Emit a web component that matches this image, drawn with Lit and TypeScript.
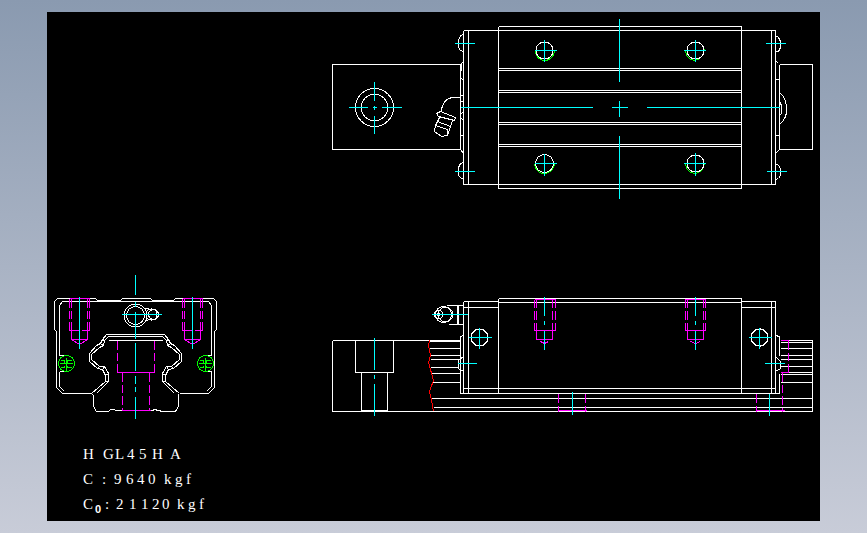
import {LitElement, html, svg, css} from 'lit';
import {customElement} from 'lit/decorators.js';

// every view is traced in its own zoomed (3x) coordinates, origin = page position of the crop
interface View {
    x: number;
    y: number;
    white?: string;
    cyan?: string;
    magenta?: string;
    dash?: string;
    green?: string;
    red?: string;
    circles?: [number, number, number, string][];
}

const circle = (cx: number, cy: number, r: number, cls = 'w') => [cx, cy, r, cls] as [number, number, number, string];

const mirrorX = (d: string, axis: number) =>
    d.replace(/([ML])(-?[\d.]+) (-?[\d.]+)/g, (_m, c, x, y) => `${c}${axis - Number(x)} ${y}`);

const snap = (origin: number, v: number) => Math.floor(origin + v / 3) + 0.5;

// traced coordinates to page pixels, on pixel centres so lines stay one pixel wide
const toPage = (d: string, v: View) =>
    d.replace(/(-?[\d.]+) (-?[\d.]+)/g, (_m, x, y) => `${snap(v.x, Number(x))} ${snap(v.y, Number(y))}`);

const dashed = (d: string, on = 26, off = 9) => {
    let out = '';
    for (const m of d.matchAll(/M(-?[\d.]+) (-?[\d.]+)L(-?[\d.]+) (-?[\d.]+)/g)) {
        const [x1, y1, x2, y2] = m.slice(1).map(Number);
        const len = Math.hypot(x2 - x1, y2 - y1);
        const ux = (x2 - x1) / len;
        const uy = (y2 - y1) / len;
        for (let t = 0; t < len; t += on + off) {
            const e = Math.min(t + on, len);
            out += `M${x1 + ux * t} ${y1 + uy * t}L${x1 + ux * e} ${y1 + uy * e} `;
        }
    }
    return out;
};

const frontBlock = `M165 100L52 100L43 110L43 193L50 198L50 368L68 385L155 385
    M58 272L58 120L68 110L180 108 M58 320L58 365L72 378 M58 272L78 272 M58 320L78 320
    M200 208L186 222L182 234L170 240L148 265L148 288L172 310L186 312L197 332L197 348L155 385
    M204 215L194 226L190 240L178 247L155 268L155 284L178 303L192 304L205 326L205 350L168 385
    M182 234L190 240 M172 310L178 303 M186 222L194 226 M186 312L192 304 M197 332L205 326 M197 348L205 350`;

const thread = (cx: number) => `M${cx - 20} 296L${cx + 20} 296 M${cx} 276L${cx} 316
    M${cx - 16} 286L${cx - 5} 286L${cx - 5} 292 M${cx + 16} 286L${cx + 5} 286L${cx + 5} 292
    M${cx - 16} 306L${cx - 5} 306L${cx - 5} 300 M${cx + 16} 306L${cx + 5} 306L${cx + 5} 300`;

const views: View[] = [
    // plan view, left half
    {
        x: 320, y: 15,
        white: `M422 148L37 148L37 404L422 404 M422 148L422 404
            M430 46L430 509L810 509 M445 46L445 509 M430 46L810 46
            M535 34L810 34 M535 520L810 520 M535 34L535 520
            M535 160L810 160 M535 166L810 166 M535 226L810 226 M535 232L810 232
            M535 322L810 322 M535 328L810 328 M535 388L810 388 M535 394L810 394
            M430 58L420 62L414 75L414 98L420 107L430 110
            M430 442L420 446L414 458L414 480L420 488L430 492
            M430 140L423 146L421 190L430 194 M430 240L421 242L421 258L430 260
            M430 292L421 294L421 310L430 312 M421 362L430 362 M421 310L421 404L430 416
            M421 190L421 242`,
        cyan: `M84 277L142 277 M183 277L243 277 M157 277L170 277 M163 198L163 255 M163 270L163 284 M163 300L163 356
            M402 85L462 85 M402 469L462 469 M420 277L810 277
            M642 106L710 106 M673 72L673 140 M642 445L710 445 M673 414L673 482`,
        green: `M645 108C650 146 696 146 702 108 M644 447C650 485 695 485 702 447`,
        circles: [circle(163, 277, 57), circle(163, 277, 40), circle(673, 106, 26), circle(673, 445, 27)],
    },
    // grease nipple on the plan view
    {
        x: 425, y: 85,
        white: `M105 38L78 38C62 42 50 58 48 80
            M35 85L45 80L92 98L88 105L40 95Z M42 98L38 108L75 125L82 106
            M38 108L30 122L28 140L50 155L68 150L75 125 M30 122L68 134L68 150`,
    },
    // plan view, right half
    {
        x: 590, y: 15,
        white: `M0 34L454 34L454 520L0 520 M0 46L556 46L556 509L0 509 M544 46L544 509
            M0 160L454 160 M0 166L454 166 M0 226L454 226 M0 232L454 232
            M0 322L454 322 M0 328L454 328 M0 388L454 388 M0 394L454 394
            M568 148L667 148L667 404L568 404L568 148
            M556 60L566 66L572 78L572 98L566 108L556 110
            M556 444L566 450L572 460L572 482L566 490L556 494
            M556 136L566 146 M556 192L568 192 M556 360L568 360 M556 415L568 404
            M570 234C590 248 600 300 570 326 M570 262C578 280 578 290 570 300`,
        cyan: `M0 277L8 277 M63 277L113 277 M168 277L567 277
            M88 10L88 200 M88 255L88 305 M88 360L88 550
            M279 106L347 106 M316 72L316 140 M279 445L347 445 M316 412L316 480
            M525 85L585 85 M528 469L588 469`,
        green: `M287 108C292 146 338 144 344 104 M286 447C291 485 338 483 344 445`,
        circles: [circle(316, 106, 26), circle(316, 445, 26)],
    },
    // end view
    {
        x: 40, y: 265,
        white: `${frontBlock} ${mirrorX(frontBlock, 572)}
            M165 100L173 106L240 106L248 100L330 100L338 106L400 106L407 100
            M68 108L504 108
            M200 208L372 208 M204 215L368 215 M205 226L367 226
            M155 385L160 392L160 425L170 438L205 438L210 433L235 436L337 436L342 433L368 438L405 438L415 425L415 392L415 385
            M315 130L335 133 M315 166L335 163`,
        cyan: `M286 28L286 88 M286 108L286 125 M286 140L286 220 M286 232L286 315 M286 332L286 355 M286 365L286 380 M286 395L286 460
            M118 95L118 250 M457 95L457 250 M243 148L365 148`,
        magenta: `M88 100L148 100 M427 100L487 100 M94 222L142 222 M94 222L118 237L142 222 M433 222L481 222 M433 222L457 237L481 222
            M94 195L94 222 M142 195L142 222 M433 195L433 222 M481 195L481 222
            M232 322L344 322 M247 437L330 437`,
        dash: `M88 100L88 195 M94 100L94 195 M142 100L142 195 M148 100L148 195 M88 195L148 195
            M427 100L427 195 M433 100L433 195 M481 100L481 195 M487 100L487 195 M427 195L487 195
            M232 226L232 322 M344 226L344 322 M247 322L247 437 M328 322L328 437`,
        green: `${thread(78)} ${thread(495)}`,
        circles: [
            circle(286, 150, 34), circle(286, 150, 27), circle(340, 148, 15), circle(335, 148, 17),
            circle(78, 296, 24, 'g'), circle(495, 296, 24, 'g'),
        ],
    },
    // side view, left half
    {
        x: 320, y: 285,
        white: `M37 166L420 166 M37 166L37 380L810 380 M106 166L106 262L220 262L220 166 M125 262L125 377L203 377L203 262
            M328 168L420 168 M328 190L420 190 M330 212L420 212 M330 222L415 222 M330 246L415 246 M335 266L420 266 M338 292L420 292
            M335 340L810 340 M340 368L810 368
            M430 50L430 325 M445 50L445 325 M430 50L535 50 M430 68L535 68 M535 40L810 40 M535 52L810 52 M535 40L535 325
            M430 310L810 310 M420 325L810 325 M420 155L420 325
            M430 152L422 155L420 210 M430 215L415 225L415 250L430 258
            M380 62L430 62 M385 118L430 118 M413 62L413 118 M416 62L416 118`,
        cyan: `M163 156L163 252 M163 268L163 280 M163 295L163 392 M333 88L443 88 M445 157L513 157 M479 127L479 190
            M412 235L470 235 M673 33L673 90 M673 105L673 118 M673 135L673 192 M757 320L757 388`,
        magenta: `M643 42L705 42 M649 136L698 136 M649 162L698 162 M660 168L673 176L686 168 M649 136L649 162 M698 136L698 162 M715 377L800 377`,
        dash: `M643 42L643 136 M649 42L649 136 M698 42L698 136 M705 42L705 136 M643 136L705 136 M715 325L715 380 M797 325L797 380`,
        red: `M328 166L325 180L332 210L325 232L340 285L328 320L335 345L340 380`,
        circles: [
            circle(479, 157, 26), circle(479, 157, 25), circle(355, 88, 13), circle(355, 88, 5),
            circle(370, 88, 24), circle(376, 88, 22),
        ],
    },
    // side view, right half
    {
        x: 590, y: 285,
        white: `M0 40L454 40L454 325 M0 52L454 52 M454 50L556 50 M454 68L556 68 M544 50L544 325 M556 50L556 325
            M0 310L556 310 M0 325L568 325 M568 265L568 325 M0 340L667 340 M0 368L667 368 M0 380L667 380 M667 166L667 380
            M570 166L667 166 M570 172L667 172 M570 190L667 190 M570 212L667 212 M572 222L667 222 M572 244L667 244
            M570 262L667 262 M570 268L667 268 M570 292L667 292
            M556 150L568 155L568 210 M556 215L572 228L572 250L556 260`,
        cyan: `M316 33L316 90 M316 105L316 118 M316 135L316 192 M474 157L544 157 M509 126L509 189 M522 235L582 235 M538 325L538 392`,
        magenta: `M284 42L345 42 M292 136L340 136 M292 162L340 162 M302 168L316 176L330 168 M292 136L292 162 M340 136L340 162
            M499 377L584 377 M570 166L596 166 M570 262L596 262`,
        dash: `M285 42L285 136 M292 42L292 136 M340 42L340 136 M345 42L345 136 M285 136L345 136
            M499 325L499 380 M577 262L577 380 M596 166L596 262`,
        circles: [circle(509, 157, 26), circle(509, 157, 25)],
    },
];

@customElement('app-root')
export class AppRoot extends LitElement {
    static override styles = css`
        :host {
            display: block;
            width: 867px;
            height: 533px;
            background: linear-gradient(#8a9ab0, #c8ccd8);
        }

        .page {
            display: flex;
            padding: 12px 47px;
        }

        .sheet {
            width: 773px;
            height: 509px;
            background: #000;
        }

        svg {
            display: block;
            shape-rendering: crispEdges;
        }

        path, circle {
            fill: none;
            stroke-width: 1;
        }

        .w { stroke: #fff; }
        .c { stroke: #00ffff; }
        .m { stroke: #ff00ff; }
        .g { stroke: #00ff00; }
        .r { stroke: #ff0000; }

        text {
            fill: #fff;
            font-family: "Liberation Serif", serif;
            font-size: 15px;
        }

        .sub {
            font-family: "Liberation Sans", sans-serif;
            font-size: 11px;
            font-weight: 700;
        }
    `;

    private renderView(v: View) {
        const path = (cls: string, d?: string) => (d ? svg`<path class=${cls} d=${toPage(d, v)}></path>` : '');
        return svg`
            ${path('g', v.green)}
            ${path('w', v.white)}
            ${(v.circles ?? []).map(
                ([cx, cy, r, cls]) =>
                    svg`<circle class=${cls} cx=${snap(v.x, cx)} cy=${snap(v.y, cy)} r=${r / 3}></circle>`
            )}
            ${path('m', v.magenta)}
            ${path('m', v.dash ? dashed(v.dash) : undefined)}
            ${path('r', v.red)}
            ${path('c', v.cyan)}
        `;
    }

    override render() {
        return html`
            <div class="page">
                <div class="sheet">
                    <svg width="773" height="509" viewBox="47 12 773 509">
                        ${views.map((v) => this.renderView(v))}
                        <text y="459" x="83 96 103 115 127 139 152 164 170">H GL45H A</text>
                        <text y="484" x="83 94 102 106 114 126 137 148 158 164 175 186">C : 9640 kgf</text>
                        <text y="509" x="83">C</text>
                        <text class="sub" x="95" y="513">0</text>
                        <text y="509" x="105 110 116 129 141 152 162 172 177 188 199">: 21120 kgf</text>
                    </svg>
                </div>
            </div>
        `;
    }
}
